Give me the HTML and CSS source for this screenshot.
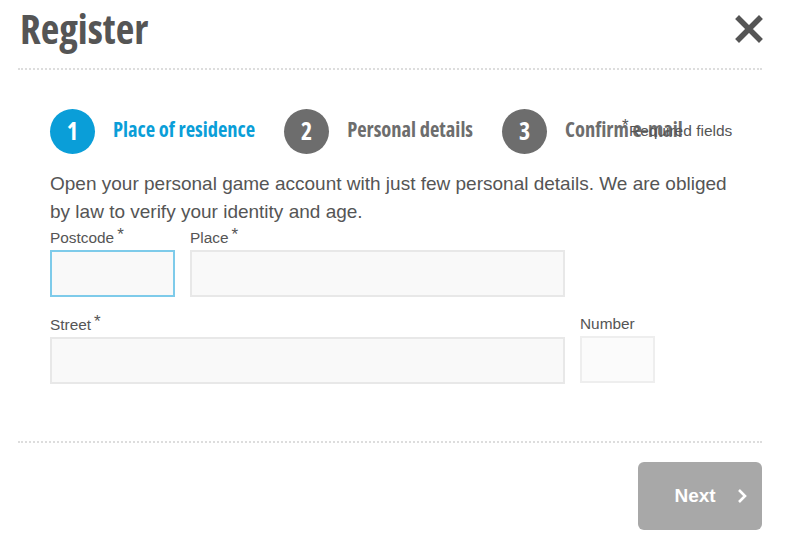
FILE: index.html
```html
<!DOCTYPE html>
<html>
<head>
<meta charset="utf-8">
<link rel="stylesheet" href="styles.css">
</head>
<body>
<div class="modal">
  <header class="head">
    <h1 class="title">Register</h1>
    <button class="close" aria-label="Close">
      <svg width="28" height="28" viewBox="0 0 28 28"><path d="M4 4 L24 24 M24 4 L4 24" stroke="#555" stroke-width="5.5" stroke-linecap="square"/></svg>
    </button>
  </header>
  <div class="body">
    <div class="steps">
      <div class="step active"><span class="num">1</span><span class="lbl">Place of residence</span></div>
      <div class="step"><span class="num">2</span><span class="lbl">Personal details</span></div>
      <div class="step"><span class="num">3</span><span class="lbl">Confirm e-mail</span></div>
      <div class="req"><span class="ast">*</span> Required fields</div>
    </div>
    <p class="intro">Open your personal game account with just few personal details. We are obliged by law to verify your identity and age.</p>
    <div class="row">
      <label class="field w-post"><span class="flabel">Postcode<sup>*</sup></span><span class="input focus"></span></label>
      <label class="field w-place"><span class="flabel">Place<sup>*</sup></span><span class="input"></span></label>
    </div>
    <div class="row row2">
      <label class="field w-street"><span class="flabel">Street<sup>*</sup></span><span class="input"></span></label>
      <label class="field w-num"><span class="flabel">Number</span><span class="input light"></span></label>
    </div>
  </div>
  <footer class="foot">
    <button class="next">Next <svg width="12" height="16" viewBox="0 0 12 16"><path d="M3 2 L9 8 L3 14" fill="none" stroke="#fff" stroke-width="2.6"/></svg></button>
  </footer>
</div>
</body>
</html>
```
FILE: styles.css
```css
* { box-sizing: border-box; }
html, body { margin: 0; padding: 0; background: #fff; }
body { font-family: "Liberation Sans", Arial, sans-serif; color: #555; }
.modal { width: 785px; height: 543px; padding: 0 23px 0 18px; }
.head { display: flex; justify-content: space-between; align-items: flex-start; height: 70px; border-bottom: 2px dotted #ddd; }
.title { margin: 0 0 0 2px; font-family: "Open Sans", sans-serif; font-stretch: 75%; font-weight: 700; font-size: 40.5px; line-height: 57px; color: #555; }
.close { border: 0; background: none; padding: 0; margin: 15px -2px 0 0; width: 30px; height: 30px; }
.body { padding: 38px 0 0 32px; height: 373px; border-bottom: 2px dotted #ddd; }
.steps { display: flex; align-items: center; position: relative; height: 46px; }
.step { display: flex; align-items: center; margin-right: 29px; }
.num { width: 45px; height: 45px; border-radius: 50%; background: #6d6d6d; color: #fff; font-family: "Open Sans", sans-serif; font-stretch: 75%; font-weight: 700; font-size: 24px; padding-bottom: 2px; display: flex; align-items: center; justify-content: center; }
.lbl { margin-left: 18px; padding-bottom: 4px; font-family: "Open Sans", sans-serif; font-stretch: 75%; font-weight: 700; font-size: 20.5px; color: #6d6d6d; }
.active .num { background: #0a9ed8; }
.active .lbl { color: #0a9ed8; }
.req { position: absolute; left: 572px; top: 13px; font-size: 15.5px; color: #555; }
.ast { position: relative; top: -5px; font-size: 17px; margin-right: -4px; }
.intro { margin: 16px 0 0 0; width: 700px; font-size: 19px; line-height: 28px; color: #555; }
.row { display: flex; gap: 15px; margin-top: 0; }
.row2 { margin-top: 16px; }
.field { display: flex; flex-direction: column; }
.flabel { font-size: 15.4px; color: #555; height: 24px; line-height: 24px; }
.flabel sup { font-size: 17px; vertical-align: 0; position: relative; top: -3px; margin-left: 3px; }
.input { display: block; height: 47px; border: 2px solid #e8e8e8; background: #f9f9f9; }
.input.focus { border-color: #7ecbea; }
.input.light { border-color: #eee; background: #fbfbfb; }
.w-post { width: 125px; }
.w-place { width: 375px; }
.w-street { width: 515px; }
.w-num { width: 75px; }
.w-num .flabel { margin-top: -1px; }
.foot { display: flex; justify-content: flex-end; padding-top: 19px; }
.next { width: 124px; height: 68px; border: 0; border-radius: 6px; background: #a8a8a8; color: #fff; font-family: "Liberation Sans", Arial, sans-serif; font-weight: bold; font-size: 19px; display: flex; align-items: center; justify-content: center; gap: 20px; padding: 0 0 0 22px; }
```
